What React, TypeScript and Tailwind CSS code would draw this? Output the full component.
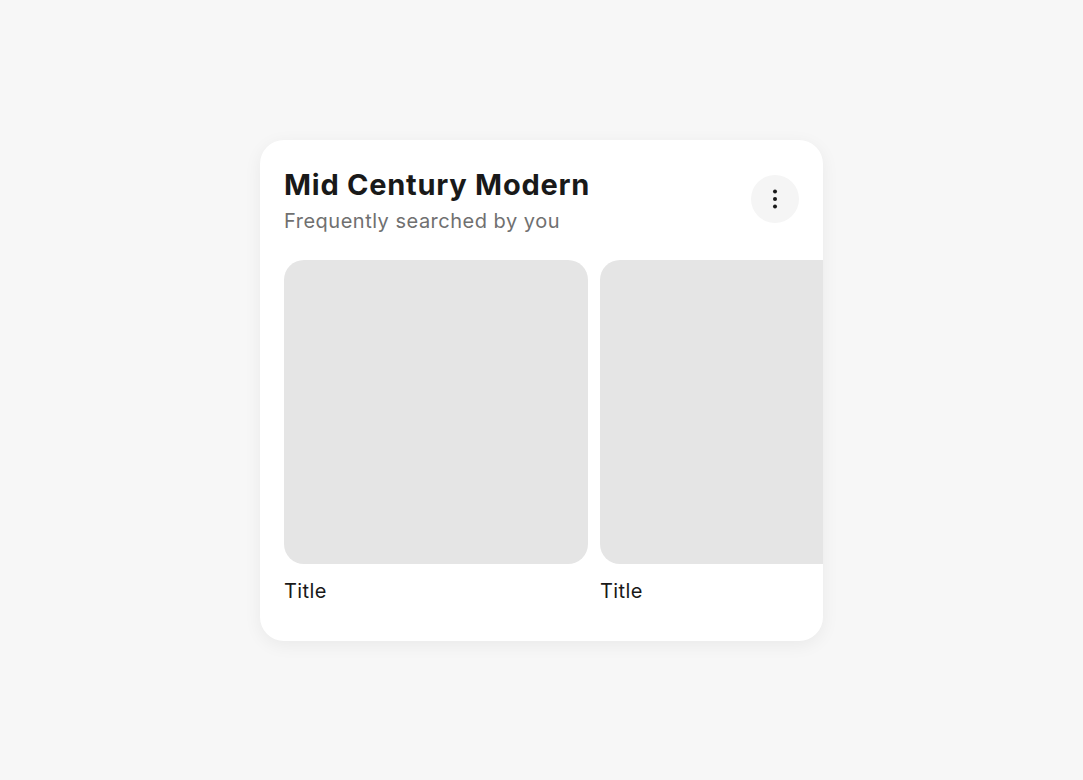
import { useState } from "react";

type Item = { title: string };

const items: Item[] = [{ title: "Title" }, { title: "Title" }];

function MoreButton() {
  return (
    <button
      type="button"
      aria-label="More options"
      className="mt-2 flex h-12 w-12 shrink-0 items-center justify-center rounded-full bg-[#f5f5f5] text-[#191919]"
    >
      <svg width="24" height="24" viewBox="0 0 24 24" fill="currentColor">
        <circle cx="12" cy="4.5" r="2" />
        <circle cx="12" cy="12" r="2" />
        <circle cx="12" cy="19.5" r="2" />
      </svg>
    </button>
  );
}

function ItemTile({ title }: Item) {
  return (
    <div className="flex w-[304px] shrink-0 flex-col">
      <div className="h-[304px] w-full rounded-[20px] bg-[#e5e5e5]" />
      <div className="mt-[13px] text-[20px] leading-7 tracking-[0.02em] text-[#191919]">{title}</div>
    </div>
  );
}

export default function App() {
  const [list] = useState(items);

  return (
    <div
      className="flex min-h-[780px] w-full items-center justify-center bg-[#f7f7f7]"
      style={{ fontFamily: "Inter, 'Noto Sans', sans-serif" }}
    >
      <div className="w-[563px] overflow-hidden rounded-[24px] bg-white pt-[27px] pb-9 shadow-[0_4px_18px_rgba(0,0,0,0.06)]">
        <div className="flex items-start justify-between px-6">
          <div className="min-w-0">
            <div className="text-[29px] leading-9 font-bold tracking-[0.026em] text-[#191919]">
              Mid Century Modern
            </div>
            <div className="mt-1 text-[20px] leading-7 tracking-[0.025em] text-[#707070]">
              Frequently searched by you
            </div>
          </div>
          <MoreButton />
        </div>

        <div className="mt-[25px] flex gap-3 pl-6">
          {list.map((item, i) => (
            <ItemTile key={i} {...item} />
          ))}
        </div>
      </div>
    </div>
  );
}
